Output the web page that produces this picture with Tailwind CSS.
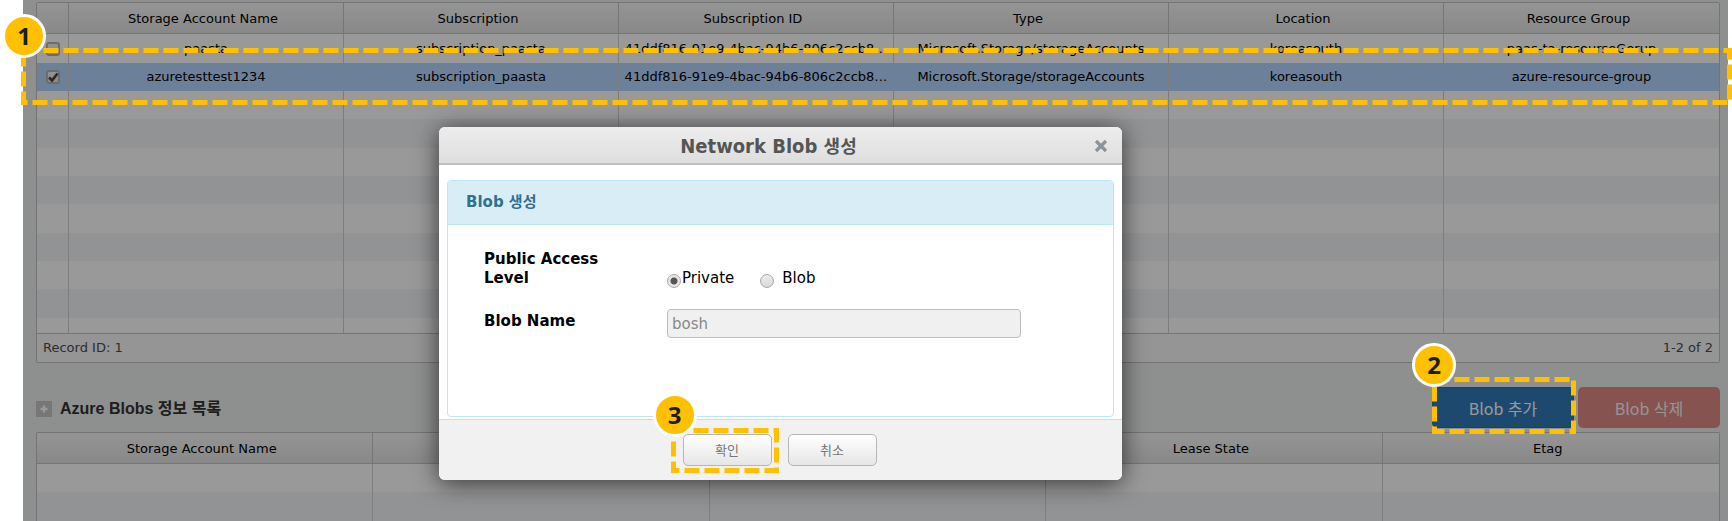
<!DOCTYPE html>
<html lang="ko">
<head>
<meta charset="utf-8">
<title>Azure Storage Blobs</title>
<script src="https://cdn.jsdelivr.net/npm/@tailwindcss/browser@4"></script>
</head>
<body class="bg-white min-h-screen overflow-hidden flex flex-col font-['DejaVu_Sans','Noto_Sans_CJK_KR',sans-serif] text-[13px] text-black">
<main class="relative ml-[23px] mr-1 px-[13px] pr-2 pt-0.5 grow bg-[#edf0ee]">

  <!-- Storage accounts grid -->
  <section class="border border-[#c2c2c2] rounded-xs bg-white overflow-hidden">
    <table class="w-full table-fixed border-separate border-spacing-0 text-center leading-4">
      <thead>
        <tr class="h-[31px] bg-linear-to-b from-[#f8f8f8] to-[#e3e3e3] *:border-b *:border-r *:last:border-r-0 *:border-[#c5c5c5] *:font-normal *:pt-0.5 *:pr-1.5 *:pb-0 *:pl-0">
          <th class="w-8" aria-label="Select"></th><th>Storage Account Name</th><th>Subscription</th><th>Subscription ID</th><th>Type</th><th>Location</th><th>Resource Group</th>
        </tr>
      </thead>
      <tbody class="*:*:border-r *:*:border-[#d0d0d0] *:*:last:border-r-0 *:*:p-0 *:*:whitespace-nowrap">
        <tr class="h-[29px] bg-white">
          <td><label class="flex justify-center"><input type="checkbox" aria-label="paasta" class="appearance-none size-3.5 rounded-[3px] border-2 border-[#b5b5b5] bg-linear-to-b from-[#f4f4f4] to-[#e4e4e4]"></label></td>
          <td>paasta</td><td>subscription_paasta</td><td>41ddf816-91e9-4bac-94b6-806c2ccb8…</td><td>Microsoft.Storage/storageAccounts</td><td>koreasouth</td><td>paas-ta-resourseGorup</td>
        </tr>
        <tr class="h-7 bg-[#b6d5ff]">
          <td><label class="flex justify-center relative"><input type="checkbox" checked aria-label="azuretesttest1234" class="appearance-none size-3.5 rounded-[3px] border-2 border-[#b5b5b5] bg-linear-to-b from-[#f4f4f4] to-[#e4e4e4]"><svg class="absolute inset-0 m-auto size-3.5 pointer-events-none" viewBox="0 0 14 14"><path d="M3 7.5 6 10.5 11.5 3.5" fill="none" stroke="#444" stroke-width="2.6"/></svg></label></td>
          <td>azuretesttest1234</td><td>subscription_paasta</td><td>41ddf816-91e9-4bac-94b6-806c2ccb8…</td><td>Microsoft.Storage/storageAccounts</td><td>koreasouth</td><td>azure-resource-group</td>
        </tr>
        <tr class="h-7 bg-white"><td></td><td></td><td></td><td></td><td></td><td></td><td></td></tr>
        <tr class="h-[29px] bg-[#f3f5f8]"><td></td><td></td><td></td><td></td><td></td><td></td><td></td></tr>
        <tr class="h-7 bg-white"><td></td><td></td><td></td><td></td><td></td><td></td><td></td></tr>
        <tr class="h-7 bg-[#f3f5f8]"><td></td><td></td><td></td><td></td><td></td><td></td><td></td></tr>
        <tr class="h-[29px] bg-white"><td></td><td></td><td></td><td></td><td></td><td></td><td></td></tr>
        <tr class="h-7 bg-[#f3f5f8]"><td></td><td></td><td></td><td></td><td></td><td></td><td></td></tr>
        <tr class="h-7 bg-white"><td></td><td></td><td></td><td></td><td></td><td></td><td></td></tr>
        <tr class="h-[29px] bg-[#f3f5f8]"><td></td><td></td><td></td><td></td><td></td><td></td><td></td></tr>
        <tr class="h-[15px] bg-white"><td></td><td></td><td></td><td></td><td></td><td></td><td></td></tr>
      </tbody>
    </table>
    <div class="flex justify-between items-center h-[29px] px-1.5 border-t border-[#c5c5c5] bg-[#f8f8f8] text-[#4d4d4d]"><span>Record ID: 1</span><span>1-2 of 2</span></div>
  </section>

  <!-- Blobs heading and actions -->
  <div class="flex items-center justify-between mt-6 mb-1">
    <h2 class="flex items-center gap-2 pt-0.5 font-bold text-base leading-5 font-['Liberation_Sans','Noto_Sans_CJK_KR',sans-serif] text-[#333]">
      <svg class="size-4" viewBox="0 0 16 16"><path fill="#c6c6c6" d="M0 0h16v16H0z"/><path d="M8 4.5v7M4.5 8h7" stroke="#fff" stroke-width="2.4"/></svg>
      Azure Blobs 정보 목록
    </h2>
    <div class="flex gap-1 font-['Noto_Sans_CJK_KR',sans-serif] text-base leading-6">
      <div class="relative">
        <button class="w-[142px] h-[41px] rounded-[5px] border border-[#2e6da4] bg-[#337ab7] text-white">Blob 추가</button>
        <svg class="absolute z-30 left-0 -top-2.5 w-36 h-[57px] pointer-events-none" aria-hidden="true"><rect x="2.5" y="2.5" width="139" height="52" fill="none" stroke="#ffc000" stroke-width="5" stroke-dasharray="15 5"/></svg>
        <span class="absolute z-30 -left-5 -top-11 size-11 rounded-full border-[3px] border-white bg-[#ffc000] flex items-center justify-center font-['Noto_Sans'] font-bold text-2xl text-[#1c1c1c]">2</span>
      </div>
      <button class="w-[142px] h-[41px] rounded-[5px] bg-[#e08a87] text-[#f8f8f8]">Blob 삭제</button>
    </div>
  </div>

  <!-- Blobs grid -->
  <section class="border border-b-0 border-[#c2c2c2] rounded-t-xs bg-white overflow-hidden">
    <table class="w-full table-fixed border-separate border-spacing-0 text-center leading-4">
      <thead>
        <tr class="h-[31px] bg-linear-to-b from-[#f8f8f8] to-[#e3e3e3] *:border-b *:border-r *:last:border-r-0 *:border-[#c5c5c5] *:font-normal *:pt-0.5 *:pr-1.5 *:pb-0 *:pl-0">
          <th>Storage Account Name</th><th></th><th></th><th>Lease State</th><th>Etag</th>
        </tr>
      </thead>
      <tbody class="*:*:border-r *:*:border-[#d0d0d0] *:*:last:border-r-0 *:*:p-0">
        <tr class="h-7 bg-white"><td></td><td></td><td></td><td></td><td></td></tr>
        <tr class="h-[29px] bg-[#f3f5f8]"><td></td><td></td><td></td><td></td><td></td></tr>
      </tbody>
    </table>
  </section>

  <div class="absolute inset-0 z-10 bg-black/40"></div>

  <!-- Step 1 marker around the selected row -->
  <svg class="absolute z-30 -left-0.5 top-12 w-[calc(100%+6px)] h-[57px] pointer-events-none" aria-hidden="true"><rect x="2.5" y="2.5" class="w-[calc(100%-5px)]" height="52" fill="none" stroke="#ffc000" stroke-width="5" stroke-dasharray="15 5"/></svg>
  <span class="absolute z-30 -left-[21px] top-3.5 size-11 rounded-full border-[3px] border-white bg-[#ffc000] flex items-center justify-center font-['Noto_Sans'] font-bold text-2xl text-[#1c1c1c]">1</span>
</main>

<!-- Dialog -->
<div role="dialog" aria-labelledby="dlg-title" class="absolute z-20 left-[439px] top-[127px] w-[683px] rounded-md bg-white shadow-[0_3px_25px_rgba(0,0,0,0.65)]">
  <header class="relative flex items-center justify-center h-[38px] pr-6 rounded-t-md border-b-2 border-[#bfbfbf] bg-linear-to-b from-[#ededed] to-[#dedede]">
    <h1 id="dlg-title" class="pt-0.5 font-bold text-xl leading-6 text-[#555] font-['DejaVu_Sans_Condensed','Noto_Sans_CJK_KR',sans-serif]">Network Blob <span class="text-lg leading-6">생성</span></h1>
    <button aria-label="닫기" class="absolute right-3.5 top-3"><svg class="size-3.5" viewBox="0 0 14 14"><path d="M2 2l10 10M12 2 2 12" stroke="#8a959b" stroke-width="3.2"/></svg></button>
  </header>
  <div class="px-2 pt-[15px] pb-0.5">
    <section class="h-[237px] rounded border border-[#bce8f1]">
      <h2 class="flex items-center h-11 px-[18px] rounded-t-[3px] border-b border-[#bce8f1] bg-[#d9edf7] text-[#31708f] font-bold text-[15px]">Blob 생성</h2>
      <form class="px-9 pt-[25px] text-[15px] leading-[19px]">
        <fieldset class="flex items-end">
          <legend class="float-left w-[183px] pr-10 font-bold">Public Access Level</legend>
          <div class="flex items-end gap-[26px]">
            <label class="flex items-center gap-px"><input type="radio" name="level" checked class="appearance-none mt-1 size-3.5 rounded-full border border-[#a8a8a8] bg-[radial-gradient(circle,#555_0_3px,#e6e6e6_4px)]">Private</label>
            <label class="flex items-center gap-2"><input type="radio" name="level" class="appearance-none mt-1 size-3.5 rounded-full border border-[#a8a8a8] bg-linear-to-b from-[#ececec] to-[#d8d8d8]">Blob</label>
          </div>
        </fieldset>
        <div class="flex items-center mt-[21px]">
          <label for="blob-name" class="w-[183px] pb-1 font-bold">Blob Name</label>
          <input id="blob-name" type="text" value="bosh" class="w-[354px] h-[29px] px-1 rounded border border-[#bdbdbd] bg-[#f0f0f0] text-[#888]">
        </div>
      </form>
    </section>
  </div>
  <footer class="flex justify-center gap-4 h-[61px] pt-3.5 pr-0.5 rounded-b-md border-t border-[#d8d8d8] bg-[#f1f1f1] text-[#777] text-[13px]">
    <div class="relative h-8">
      <button class="w-[89px] h-8 pt-0.5 rounded-[5px] border border-[#b6b6b6] bg-linear-to-b from-white to-[#e6e6e6]">확인</button>
      <svg class="absolute -left-3 -top-1.5 w-[108px] h-[45px] pointer-events-none" aria-hidden="true"><rect x="2.5" y="2.5" width="103" height="40" fill="none" stroke="#ffc000" stroke-width="5" stroke-dasharray="15 5"/></svg>
      <span class="absolute -left-[30px] -top-[41px] size-11 rounded-full border-[3px] border-white bg-[#ffc000] flex items-center justify-center font-['Noto_Sans'] font-bold text-2xl text-[#1c1c1c]">3</span>
    </div>
    <button class="w-[89px] h-8 pt-0.5 rounded-[5px] border border-[#b6b6b6] bg-linear-to-b from-white to-[#e6e6e6]">취소</button>
  </footer>
</div>
</body>
</html>
